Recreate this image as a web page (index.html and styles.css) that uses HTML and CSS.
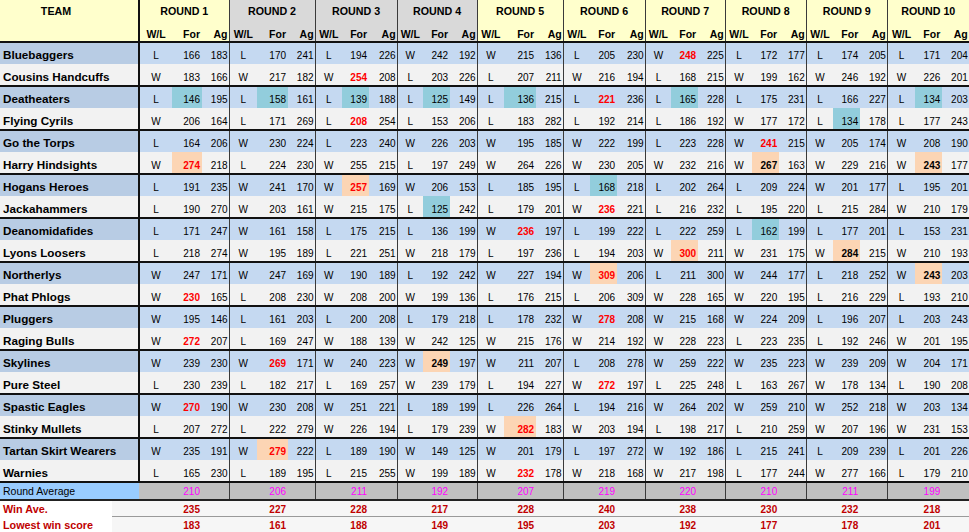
FILE: index.html
```html
<!DOCTYPE html>
<html>
<head>
<meta charset="utf-8">
<title>Tipping Results</title>
<link rel="stylesheet" href="styles.css">
</head>
<body>
<table class="sheet">
<colgroup>
<col style="width:112px"><col style="width:27px">
<col style="width:33px"><col style="width:30px"><col style="width:27px">
<col style="width:28px"><col style="width:31px"><col style="width:27px">
<col style="width:27px"><col style="width:27px"><col style="width:28px">
<col style="width:26px"><col style="width:27px"><col style="width:27px">
<col style="width:27px"><col style="width:32px"><col style="width:27px">
<col style="width:27px"><col style="width:27px"><col style="width:28px">
<col style="width:26px"><col style="width:27px"><col style="width:27px">
<col style="width:27px"><col style="width:27px"><col style="width:27px">
<col style="width:27px"><col style="width:27px"><col style="width:27px">
<col style="width:28px"><col style="width:27px"><col style="width:27px">
</colgroup>
<thead>
<tr class="h1">
<th class="tm">TEAM</th><th class="ts"></th>
<th colspan="3" class="rs">ROUND 1</th>
<th colspan="3" class="rs g">ROUND 2</th>
<th colspan="3" class="rs g">ROUND 3</th>
<th colspan="3" class="rs g">ROUND 4</th>
<th colspan="3" class="rs">ROUND 5</th>
<th colspan="3" class="rs">ROUND 6</th>
<th colspan="3" class="rs">ROUND 7</th>
<th colspan="3" class="rs">ROUND 8</th>
<th colspan="3" class="rs">ROUND 9</th>
<th colspan="3" class="rs">ROUND 10</th>
</tr>
<tr class="h2">
<th></th><th class="ts"></th>
<th class="wl">W/L</th><th class="fo">For</th><th class="ag rs">Ag</th>
<th class="wl g">W/L</th><th class="fo g">For</th><th class="ag rs g">Ag</th>
<th class="wl g">W/L</th><th class="fo g">For</th><th class="ag rs g">Ag</th>
<th class="wl g">W/L</th><th class="fo g">For</th><th class="ag rs g">Ag</th>
<th class="wl">W/L</th><th class="fo">For</th><th class="ag rs">Ag</th>
<th class="wl">W/L</th><th class="fo">For</th><th class="ag rs">Ag</th>
<th class="wl">W/L</th><th class="fo">For</th><th class="ag rs">Ag</th>
<th class="wl">W/L</th><th class="fo">For</th><th class="ag rs">Ag</th>
<th class="wl">W/L</th><th class="fo">For</th><th class="ag rs">Ag</th>
<th class="wl">W/L</th><th class="fo">For</th><th class="ag rs">Ag</th>
</tr>
</thead>
<tbody>
<tr class="a d"><td class="n" colspan="2">Bluebaggers</td><td>L</td><td>166</td><td>183</td><td>L</td><td>170</td><td>241</td><td>L</td><td>194</td><td>226</td><td>W</td><td>242</td><td>192</td><td>W</td><td>215</td><td>136</td><td>L</td><td>205</td><td>230</td><td>W</td><td class="r">248</td><td>225</td><td>L</td><td>172</td><td>177</td><td>L</td><td>174</td><td>205</td><td>L</td><td>171</td><td>204</td></tr>
<tr class="b d"><td class="n" colspan="2">Cousins Handcuffs</td><td>W</td><td>183</td><td>166</td><td>W</td><td>217</td><td>182</td><td>W</td><td class="r">254</td><td>208</td><td>L</td><td>203</td><td>226</td><td>L</td><td>207</td><td>211</td><td>W</td><td>216</td><td>194</td><td>L</td><td>168</td><td>215</td><td>W</td><td>199</td><td>162</td><td>W</td><td>246</td><td>192</td><td>W</td><td>226</td><td>201</td></tr>
<tr class="a d"><td class="n" colspan="2">Deatheaters</td><td>L</td><td class="t">146</td><td>195</td><td>L</td><td class="t">158</td><td>161</td><td>L</td><td class="t">139</td><td>188</td><td>L</td><td class="t">125</td><td>149</td><td>L</td><td class="t">136</td><td>215</td><td>L</td><td class="r">221</td><td>236</td><td>L</td><td class="t">165</td><td>228</td><td>L</td><td>175</td><td>231</td><td>L</td><td>166</td><td>227</td><td>L</td><td class="t">134</td><td>203</td></tr>
<tr class="b d"><td class="n" colspan="2">Flying Cyrils</td><td>W</td><td>206</td><td>164</td><td>L</td><td>171</td><td>269</td><td>L</td><td class="r">208</td><td>254</td><td>L</td><td>153</td><td>206</td><td>L</td><td>183</td><td>282</td><td>L</td><td>192</td><td>214</td><td>L</td><td>186</td><td>192</td><td>W</td><td>177</td><td>172</td><td>L</td><td class="t">134</td><td>178</td><td>L</td><td>177</td><td>243</td></tr>
<tr class="a d"><td class="n" colspan="2">Go the Torps</td><td>L</td><td>164</td><td>206</td><td>W</td><td>230</td><td>224</td><td>L</td><td>223</td><td>240</td><td>W</td><td>226</td><td>203</td><td>W</td><td>195</td><td>185</td><td>W</td><td>222</td><td>199</td><td>L</td><td>223</td><td>228</td><td>W</td><td class="r">241</td><td>215</td><td>W</td><td>205</td><td>174</td><td>W</td><td>208</td><td>190</td></tr>
<tr class="b d"><td class="n" colspan="2">Harry Hindsights</td><td>W</td><td class="o r">274</td><td>218</td><td>L</td><td>224</td><td>230</td><td>W</td><td>255</td><td>215</td><td>L</td><td>197</td><td>249</td><td>W</td><td>264</td><td>226</td><td>W</td><td>230</td><td>205</td><td>W</td><td>232</td><td>216</td><td>W</td><td class="o k">267</td><td>163</td><td>W</td><td>229</td><td>216</td><td>W</td><td class="o k">243</td><td>177</td></tr>
<tr class="a d"><td class="n" colspan="2">Hogans Heroes</td><td>L</td><td>191</td><td>235</td><td>W</td><td>241</td><td>170</td><td>W</td><td class="o r">257</td><td>169</td><td>W</td><td>206</td><td>153</td><td>L</td><td>185</td><td>195</td><td>L</td><td class="t">168</td><td>218</td><td>L</td><td>202</td><td>264</td><td>L</td><td>209</td><td>224</td><td>W</td><td>201</td><td>177</td><td>L</td><td>195</td><td>201</td></tr>
<tr class="b d"><td class="n" colspan="2">Jackahammers</td><td>L</td><td>190</td><td>270</td><td>W</td><td>203</td><td>161</td><td>W</td><td>215</td><td>175</td><td>L</td><td class="t">125</td><td>242</td><td>L</td><td>179</td><td>201</td><td>W</td><td class="r">236</td><td>221</td><td>L</td><td>216</td><td>232</td><td>L</td><td>195</td><td>220</td><td>L</td><td>215</td><td>284</td><td>W</td><td>210</td><td>179</td></tr>
<tr class="a d"><td class="n" colspan="2">Deanomidafides</td><td>L</td><td>171</td><td>247</td><td>W</td><td>161</td><td>158</td><td>L</td><td>175</td><td>215</td><td>L</td><td>136</td><td>199</td><td>W</td><td class="r">236</td><td>197</td><td>L</td><td>199</td><td>222</td><td>L</td><td>222</td><td>259</td><td>L</td><td class="t">162</td><td>199</td><td>L</td><td>177</td><td>201</td><td>L</td><td>153</td><td>231</td></tr>
<tr class="b d"><td class="n" colspan="2">Lyons Loosers</td><td>L</td><td>218</td><td>274</td><td>W</td><td>195</td><td>189</td><td>L</td><td>221</td><td>251</td><td>W</td><td>218</td><td>179</td><td>L</td><td>197</td><td>236</td><td>L</td><td>194</td><td>203</td><td>W</td><td class="o r">300</td><td>211</td><td>W</td><td>231</td><td>175</td><td>W</td><td class="o k">284</td><td>215</td><td>W</td><td>210</td><td>193</td></tr>
<tr class="a d"><td class="n" colspan="2">Northerlys</td><td>W</td><td>247</td><td>171</td><td>W</td><td>247</td><td>169</td><td>W</td><td>190</td><td>189</td><td>L</td><td>192</td><td>242</td><td>W</td><td>227</td><td>194</td><td>W</td><td class="o r">309</td><td>206</td><td>L</td><td>211</td><td>300</td><td>W</td><td>244</td><td>177</td><td>L</td><td>218</td><td>252</td><td>W</td><td class="o k">243</td><td>203</td></tr>
<tr class="b d"><td class="n" colspan="2">Phat Phlogs</td><td>W</td><td class="r">230</td><td>165</td><td>L</td><td>208</td><td>230</td><td>W</td><td>208</td><td>200</td><td>W</td><td>199</td><td>136</td><td>L</td><td>176</td><td>215</td><td>L</td><td>206</td><td>309</td><td>W</td><td>228</td><td>165</td><td>W</td><td>220</td><td>195</td><td>L</td><td>216</td><td>229</td><td>L</td><td>193</td><td>210</td></tr>
<tr class="a d"><td class="n" colspan="2">Pluggers</td><td>W</td><td>195</td><td>146</td><td>L</td><td>161</td><td>203</td><td>L</td><td>200</td><td>208</td><td>L</td><td>179</td><td>218</td><td>L</td><td>178</td><td>232</td><td>W</td><td class="r">278</td><td>208</td><td>W</td><td>215</td><td>168</td><td>W</td><td>224</td><td>209</td><td>L</td><td>196</td><td>207</td><td>L</td><td>203</td><td>243</td></tr>
<tr class="b d"><td class="n" colspan="2">Raging Bulls</td><td>W</td><td class="r">272</td><td>207</td><td>L</td><td>169</td><td>247</td><td>W</td><td>188</td><td>139</td><td>W</td><td>242</td><td>125</td><td>W</td><td>215</td><td>176</td><td>W</td><td>214</td><td>192</td><td>W</td><td>228</td><td>223</td><td>L</td><td>223</td><td>235</td><td>L</td><td>192</td><td>246</td><td>W</td><td>201</td><td>195</td></tr>
<tr class="a d"><td class="n" colspan="2">Skylines</td><td>W</td><td>239</td><td>230</td><td>W</td><td class="r">269</td><td>171</td><td>W</td><td>240</td><td>223</td><td>W</td><td class="o k">249</td><td>197</td><td>W</td><td>211</td><td>207</td><td>L</td><td>208</td><td>278</td><td>W</td><td>259</td><td>222</td><td>W</td><td>235</td><td>223</td><td>W</td><td>239</td><td>209</td><td>W</td><td>204</td><td>171</td></tr>
<tr class="b d"><td class="n" colspan="2">Pure Steel</td><td>L</td><td>230</td><td>239</td><td>L</td><td>182</td><td>217</td><td>L</td><td>169</td><td>257</td><td>W</td><td>239</td><td>179</td><td>L</td><td>194</td><td>227</td><td>W</td><td class="r">272</td><td>197</td><td>L</td><td>225</td><td>248</td><td>L</td><td>163</td><td>267</td><td>W</td><td>178</td><td>134</td><td>L</td><td>190</td><td>208</td></tr>
<tr class="a d"><td class="n" colspan="2">Spastic Eagles</td><td>W</td><td class="r">270</td><td>190</td><td>W</td><td>230</td><td>208</td><td>W</td><td>251</td><td>221</td><td>L</td><td>189</td><td>199</td><td>L</td><td>226</td><td>264</td><td>L</td><td>194</td><td>216</td><td>W</td><td>264</td><td>202</td><td>W</td><td>259</td><td>210</td><td>W</td><td>252</td><td>218</td><td>W</td><td>203</td><td>134</td></tr>
<tr class="b d"><td class="n" colspan="2">Stinky Mullets</td><td>L</td><td>207</td><td>272</td><td>L</td><td>222</td><td>279</td><td>W</td><td>226</td><td>194</td><td>L</td><td>179</td><td>239</td><td>W</td><td class="o r">282</td><td>183</td><td>W</td><td>203</td><td>194</td><td>L</td><td>198</td><td>217</td><td>L</td><td>210</td><td>259</td><td>W</td><td>207</td><td>196</td><td>W</td><td>231</td><td>153</td></tr>
<tr class="a d"><td class="n" colspan="2">Tartan Skirt Wearers</td><td>W</td><td>235</td><td>191</td><td>W</td><td class="o r">279</td><td>222</td><td>L</td><td>189</td><td>190</td><td>W</td><td>149</td><td>125</td><td>W</td><td>201</td><td>179</td><td>L</td><td>197</td><td>272</td><td>W</td><td>192</td><td>186</td><td>L</td><td>215</td><td>241</td><td>L</td><td>209</td><td>239</td><td>L</td><td>201</td><td>226</td></tr>
<tr class="b d"><td class="n" colspan="2">Warnies</td><td>L</td><td>165</td><td>230</td><td>L</td><td>189</td><td>195</td><td>L</td><td>215</td><td>255</td><td>W</td><td>199</td><td>189</td><td>W</td><td class="r">232</td><td>178</td><td>W</td><td>218</td><td>168</td><td>W</td><td>217</td><td>198</td><td>L</td><td>177</td><td>244</td><td>W</td><td>277</td><td>166</td><td>L</td><td>179</td><td>210</td></tr>
<tr class="avg d"><td class="lab" colspan="2">Round Average</td><td></td><td>210</td><td></td><td></td><td>206</td><td></td><td></td><td>211</td><td></td><td></td><td>192</td><td></td><td></td><td>207</td><td></td><td></td><td>219</td><td></td><td></td><td>220</td><td></td><td></td><td>210</td><td></td><td></td><td>211</td><td></td><td></td><td>199</td><td></td></tr>
<tr class="win"><td class="lab">Win Ave.</td><td class="sp"></td><td></td><td>235</td><td></td><td></td><td>227</td><td></td><td></td><td>228</td><td></td><td></td><td>217</td><td></td><td></td><td>228</td><td></td><td></td><td>240</td><td></td><td></td><td>238</td><td></td><td></td><td>230</td><td></td><td></td><td>232</td><td></td><td></td><td>218</td><td></td></tr>
<tr class="low"><td class="lab">Lowest win score</td><td class="sp"></td><td></td><td>183</td><td></td><td></td><td>161</td><td></td><td></td><td>188</td><td></td><td></td><td>149</td><td></td><td></td><td>195</td><td></td><td></td><td>203</td><td></td><td></td><td>192</td><td></td><td></td><td>177</td><td></td><td></td><td>178</td><td></td><td></td><td>201</td><td></td></tr>
</tbody>
</table>
</body>
</html>
```

FILE: styles.css
```css
* { box-sizing: border-box; }

body {
  margin: 0;
  background: #ffffff;
  font-family: "Liberation Sans", Arial, sans-serif;
  color: #000000;
}

.sheet {
  border-collapse: collapse;
  table-layout: fixed;
  width: 969px;
}

.sheet th,
.sheet td {
  padding: 0;
  white-space: nowrap;
  overflow: hidden;
}

/* header */
.sheet th {
  background: #ffffcc;
  font-weight: bold;
  font-size: 10.7px;
}
.sheet th.g { background: #d9d9d9; }

.h1 th {
  height: 22px;
  vertical-align: middle;
  text-align: center;
}
.h1 th.tm { text-align: center; }

.h2 th {
  height: 20px;
  vertical-align: bottom;
  padding-bottom: 1px;
  font-size: 10.5px;
  border-bottom: 2px solid #111;
}
.h2 th.wl { text-align: center; }
.h2 th.fo { text-align: right; padding-right: 2px; }
.h2 th.ag { text-align: right; padding-right: 1px; }

.sheet .rs { border-right: 1px solid #3a3a3a; }
.sheet .ts { border-right: 2px solid #111; }

/* body rows */
.d td {
  font-size: 10px;
  text-align: right;
  vertical-align: bottom;
  padding-bottom: 3px;
}
.d td:nth-child(3n+2) { text-align: center; }
.d td:nth-child(3n+3) { padding-right: 2px; }
.d td:nth-child(3n+4) {
  padding-right: 1px;
  border-right: 1px solid #3a3a3a;
}

tr.a td { background: #c5d9f1; height: 22px; }
tr.b td {
  background: #f2f2f2;
  height: 22px;
  border-bottom: 2px solid #111;
  padding-bottom: 2px;
}

.d td.n {
  text-align: left;
  padding-left: 3px;
  font-size: 11.7px;
  font-weight: bold;
  border-right: 2px solid #111;
}
tr.a td.n {
  background: #b8cce4;
  border-top: 1px solid #d3e0ef;
}

.d td.t { background: #92cddc; }
.d td.o { background: #fcd5b4; }
.d td.r { color: #ff0000; font-weight: bold; }
.d td.k { font-weight: bold; }

/* summary rows */
tr.avg td {
  background: #c0c0c0;
  color: #ff00ff;
  height: 18px;
  padding-bottom: 2px;
  border-bottom: 2px solid #222;
}
tr.avg td.lab {
  background: #99ccff;
  color: #000;
  font-size: 10.5px;
  text-align: left;
  padding-left: 3px;
}

tr.win td,
tr.low td {
  background: #f6f6f6;
  color: #c00000;
  font-weight: bold;
  font-size: 10px;
  text-align: right;
  padding-right: 2px;
  height: 16px;
  vertical-align: bottom;
  padding-bottom: 1px;
}
tr.win td { border-bottom: 1px solid #9a9a9a; }
tr.win td.lab,
tr.low td.lab {
  background: #ffffff;
  text-align: left;
  padding-left: 3px;
  font-size: 10.8px;
  overflow: visible;
}
tr.win td.lab { border-bottom: none; }
```
